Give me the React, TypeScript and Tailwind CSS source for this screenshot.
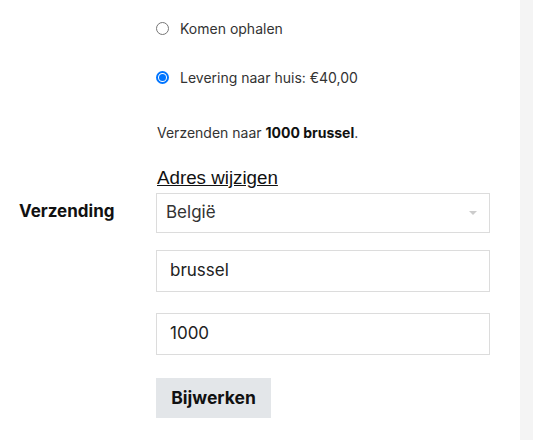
import React from "react";

export default function App() {
  return (
    <div className="flex w-[533px] h-[440px] overflow-hidden bg-white text-[#1a1a1a]" style={{ fontFamily: "Inter, 'Noto Sans', sans-serif" }}>
      <div className="flex w-[520px] shrink-0">
        <div className="w-[156px] shrink-0 pl-[19px] pt-[199px]">
          <div className="text-[17px] font-bold leading-[24px] text-[#111]">Verzending</div>
        </div>
        <div className="w-[334px] shrink-0 pt-[18px]">
          <label className="flex items-center h-[20px]">
            <span className="w-[13px] h-[13px] rounded-full border border-[#767676] bg-white" />
            <span className="ml-[11px] text-[14px] text-[#333]">Komen ophalen</span>
          </label>
          <label className="flex items-center h-[20px] mt-[29px]">
            <span className="w-[13px] h-[13px] rounded-full border-2 border-[#0075ff] bg-white flex items-center justify-center">
              <span className="w-[7px] h-[7px] rounded-full bg-[#0075ff]" />
            </span>
            <span className="ml-[11px] text-[14px] text-[#333]">Levering naar huis: €40,00</span>
          </label>
          <p className="mt-[36px] ml-[1px] text-[14px] leading-[20px] text-[#333]">
            Verzenden naar <strong className="font-bold text-[#111]">1000 brussel</strong>.
          </p>
          <a className="block mt-[22px] ml-[1px] text-[18.75px] leading-[26px] underline text-[#111]" style={{ fontFamily: "'Liberation Sans', Arial, sans-serif" }}>
            Adres wijzigen
          </a>
          <div className="mt-[2px] h-[40px] border border-[#dcdcdc] flex items-center justify-between pl-[9px] pr-[12px]">
            <span className="text-[17px] text-[#333]">België</span>
            <span className="w-0 h-0 border-l-[4px] border-r-[4px] border-t-[4px] border-l-transparent border-r-transparent border-t-[#cccccc]" />
          </div>
          <div className="mt-[17px] h-[42px] border border-[#dcdcdc] flex items-center pl-[13px]">
            <span className="text-[17px] text-[#222]">brussel</span>
          </div>
          <div className="mt-[21px] h-[42px] border border-[#dcdcdc] flex items-center pl-[13px]">
            <span className="text-[17px] text-[#222]">1000</span>
          </div>
          <button className="mt-[23px] h-[40px] w-[115px] bg-[#e3e6e9] flex items-center justify-center text-[17.5px] font-bold text-[#111]">
            Bijwerken
          </button>
        </div>
      </div>
      <div className="flex-1 bg-[#f4f4f4]" />
    </div>
  );
}
